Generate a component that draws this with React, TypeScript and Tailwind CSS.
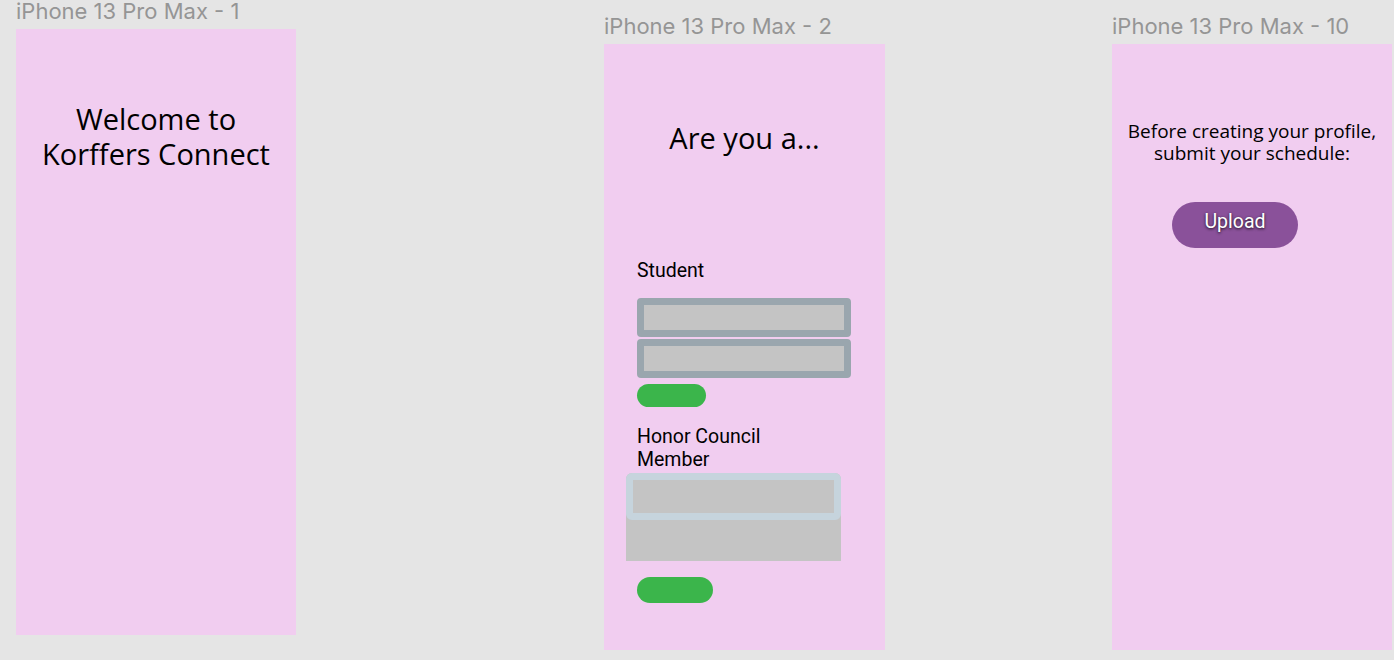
const frames = [
  { label: 'iPhone 13 Pro Max - 1' },
  { label: 'iPhone 13 Pro Max - 2' },
  { label: 'iPhone 13 Pro Max - 10' },
];

const FrameLabel = ({ text }: { text: string }) => (
  <p className="h-[24px] text-[22px] leading-[22px] text-[#959595] font-['Inter',sans-serif] whitespace-nowrap">
    {text}
  </p>
);

const Welcome = () => (
  <div className="mt-[5px] h-[606px] w-[280px] bg-[#f1cdf0] pt-[72px]">
    <p className="text-center text-[29px] leading-[35px] text-black font-['Open_Sans',sans-serif]">
      Welcome to
      <br />
      Korffers Connect
    </p>
  </div>
);

const RolePicker = () => (
  <div className="mt-[5px] h-[606px] w-[281px] bg-[#f1cdf0] pt-[76px] font-['Roboto',sans-serif]">
    <p className="text-center text-[29px] leading-[35px] text-black font-['Open_Sans',sans-serif]">
      Are you a...
    </p>

    <div className="mt-[104px] pl-[33px]">
      <p className="text-[19.5px] leading-[23px] text-black">Student</p>
      <div className="mt-[16px] flex flex-col gap-[2px] w-[214px]">
        <div className="h-[39px] rounded-[4px] border-[7px] border-[#9aa6ae] bg-[#c4c4c4]" />
        <div className="h-[39px] rounded-[4px] border-[7px] border-[#9aa6ae] bg-[#c4c4c4]" />
      </div>
      <div className="mt-[6px] h-[23px] w-[69px] rounded-full bg-[#3bb54b]" />
      <p className="mt-[18px] text-[19.5px] leading-[23px] text-black">
        Honor Council
        <br />
        Member
      </p>
    </div>

    <div className="ml-[22px] mt-[2px] h-[88px] w-[215px] rounded-t-[6px] bg-[#c4c4c4]">
      <div className="h-[47px] rounded-[6px] border-[7px] border-[#c6d4dd] bg-[#c4c4c4]" />
    </div>
    <div className="ml-[33px] mt-[16px] h-[26px] w-[76px] rounded-full bg-[#3bb54b]" />
  </div>
);

const Schedule = () => (
  <div className="mt-[5px] h-[606px] w-[280px] bg-[#f1cdf0] pt-[76px]">
    <p className="text-center text-[19px] leading-[22px] text-black font-['Open_Sans',sans-serif]">
      Before creating your profile,
      <br />
      submit your schedule:
    </p>
    <button className="ml-[60px] mt-[38px] flex h-[46px] w-[126px] justify-center rounded-full bg-[#8a519a] pt-[8px] text-[19.5px] leading-[23px] text-white font-['Roboto',sans-serif] [text-shadow:0_1px_3px_rgba(0,0,0,0.85)]">
      Upload
    </button>
  </div>
);

const App = () => {
  return (
    <div className="flex h-[660px] w-full items-start overflow-hidden bg-[#e5e5e5]">
      <div className="ml-[16px] w-[280px]">
        <FrameLabel text={frames[0].label} />
        <Welcome />
      </div>
      <div className="ml-[308px] mt-[15px] w-[281px]">
        <FrameLabel text={frames[1].label} />
        <RolePicker />
      </div>
      <div className="ml-[227px] mt-[15px] w-[280px]">
        <FrameLabel text={frames[2].label} />
        <Schedule />
      </div>
    </div>
  );
};

export default App;
